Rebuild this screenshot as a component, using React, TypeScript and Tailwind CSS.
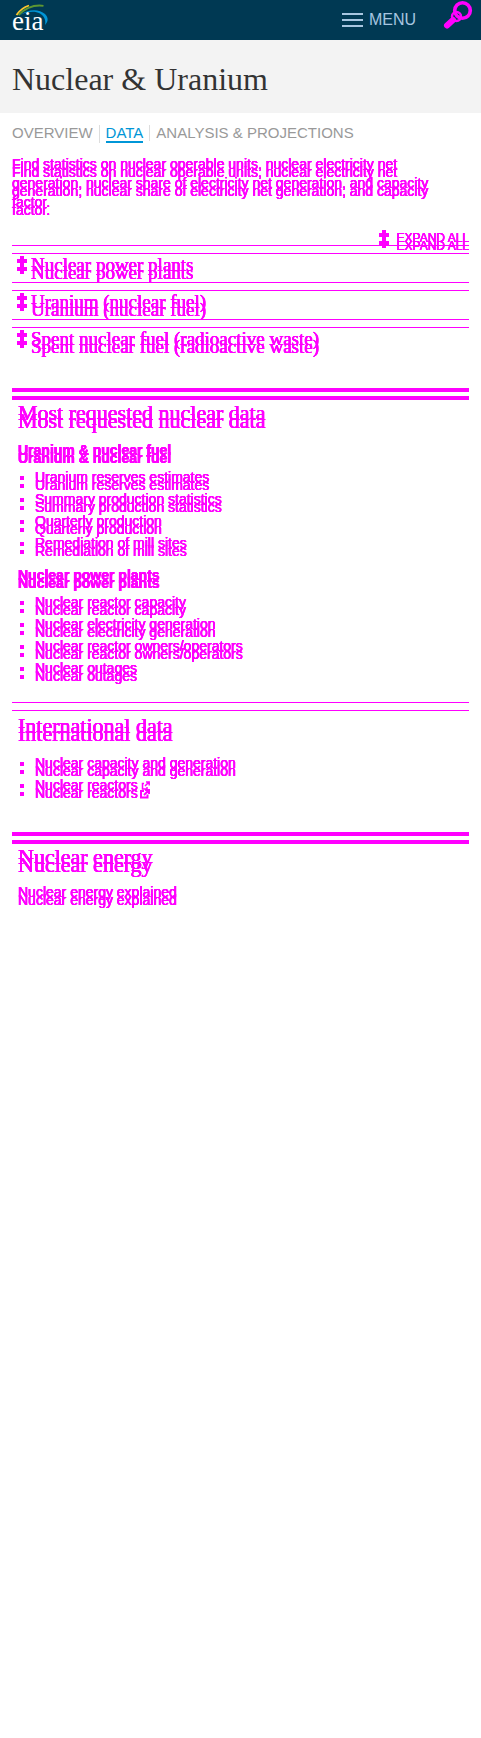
import React from "react";

const ghost =
  "text-[#ff00ff] [text-shadow:0_0_0_#f0f,0_0_0_#f0f,0_0_0_#f0f,0_0_0_#f0f,0_8px_0_#f0f,0_8px_0_#f0f,0_8px_0_#f0f,0_8px_0_#f0f,0_8px_0_#f0f]";

function Rule({ thick = false }: { thick?: boolean }) {
  return (
    <div
      className={
        thick
          ? "h-1 bg-[#ff00ff] shadow-[0_8px_0_#ff00ff]"
          : "h-px bg-[#ff00ff] shadow-[0_8px_0_#ff00ff]"
      }
    />
  );
}

function Plus() {
  return (
    <svg
      width="10"
      height="18"
      viewBox="0 0 10 18"
      fill="#ff00ff"
      shapeRendering="crispEdges"
      className="shrink-0"
      aria-hidden="true"
    >
      <path d="M3 0h4v18H3zM0 3h10v4H0zM0 11h10v4H0z" />
    </svg>
  );
}

function Heading({ children }: { children: React.ReactNode }) {
  return (
    <h2 className={`pl-[6px] font-['Liberation_Serif',serif] text-[22px] leading-6 ${ghost}`}>
      {children}
    </h2>
  );
}

function SubHeading({ children }: { children: React.ReactNode }) {
  return <h3 className={`pl-[6px] text-[14px] leading-5 font-bold ${ghost}`}>{children}</h3>;
}

function LinkList({ items, external }: { items: string[]; external?: string }) {
  return (
    <ul className="pl-2">
      {items.map((item) => (
        <li key={item} className="flex h-[22px] items-start">
          <span className="mt-[10px] mr-[11px] size-1 shrink-0 bg-[#ff00ff] shadow-[0_8px_0_#ff00ff]" />
          <a href="#" className={`text-[14px] leading-[22px] ${ghost}`}>
            {item}
          </a>
          {item === external && (
            <svg
              width="10"
              height="18"
              viewBox="0 0 10 18"
              className="mt-[7px] ml-[2px]"
              fill="none"
              stroke="#ff00ff"
              strokeWidth="1.5"
              aria-hidden="true"
            >
              <path d="M4 2.500H2.500V8H7V6M6 1H9.200V4.500M9 1L5 5" />
              <path strokeWidth="2" d="M4 10H1V16.500H7.500V13.500M5 9H9V13M9 9L4 14" />
            </svg>
          )}
        </li>
      ))}
    </ul>
  );
}

function Logo() {
  return (
    <svg width="38" height="34" viewBox="0 0 38 34" fill="none" aria-label="eia">
      <path d="M4.500 11C7.500 6.500 12 3 17 1.500" stroke="#ffc72c" strokeWidth="1.800" />
      <path d="M6.500 11C13 4.500 22 0.500 31.500 1.800" stroke="#5d9732" strokeWidth="1.800" />
      <path
        d="M8 11C16 5 27 4.500 33 10C37 14 36 18 33 21C34 17 33 12.500 28 9.500C22 6.500 15 8 8 11Z"
        fill="#0096d7"
      />
      <text x="0" y="26" fill="#fff" fontSize="27" fontFamily="Liberation Serif, serif">
        eia
      </text>
    </svg>
  );
}

export default function App() {
  return (
    <div className="min-h-screen bg-white font-['Liberation_Sans',Arial,sans-serif]">
      <header className="flex h-10 items-start justify-between bg-[#003953] pl-3 pr-2">
        <a href="#" className="mt-1">
          <Logo />
        </a>
        <div className="flex items-start">
          <button className="mt-[10px] mr-[27px] flex items-center gap-[6px] text-[16px] leading-5 text-[#a7c6e0]">
            <svg width="21" height="14" viewBox="0 0 21 14" fill="#a7c6e0" aria-hidden="true">
              <path d="M0 0h21v2H0zM0 6h21v2H0zM0 12h21v2H0z" />
            </svg>
            MENU
          </button>
          <button aria-label="Search">
            <svg width="30" height="30" viewBox="0 0 30 30" fill="none" stroke="#ff00ff">
              <circle cx="19.500" cy="10.500" r="7.800" strokeWidth="3.600" />
              <circle cx="13.500" cy="16.500" r="4.500" strokeWidth="2.500" />
              <path d="M10 20L4 25.500" strokeWidth="6" strokeLinecap="round" />
            </svg>
          </button>
        </div>
      </header>

      <div className="bg-[#f3f3f3] px-3 pt-5 pb-[15px]">
        <h1 className="font-['Liberation_Serif',serif] text-[32px] leading-[38px] text-[#333]">
          Nuclear &amp; Uranium
        </h1>
      </div>

      <nav className="flex items-start px-3 pt-3 text-[15px] leading-4 text-[#999]">
        <a href="#" className="mr-[6px]">
          OVERVIEW
        </a>
        <a
          href="#"
          className="border-l border-[#ddd] pl-[6px] mr-[6px] text-[#0096d7]"
        >
          <span className="block border-b-2 border-[#0096d7]">DATA</span>
        </a>
        <a href="#" className="border-l border-[#ddd] pl-[6px]">
          ANALYSIS &amp; PROJECTIONS
        </a>
      </nav>

      <main className="px-3 pt-3">
        <p className={`pr-6 text-[14px] leading-[19px] ${ghost}`}>
          Find statistics on nuclear operable units, nuclear electricity net generation, nuclear
          share of electricity net generation, and capacity factor.
        </p>

        <div className="mt-[18px] flex justify-end">
          <button className={`flex h-[15px] items-start gap-2 text-[12px] leading-4 ${ghost}`}>
            <Plus />
            EXPAND ALL
          </button>
        </div>

        {["Nuclear power plants", "Uranium (nuclear fuel)", "Spent nuclear fuel (radioactive waste)"].map(
          (title) => (
            <section key={title}>
              <Rule />
              <button
                className={`flex w-full items-center gap-1 pt-[9px] pb-[7px] pl-[5px] text-left font-['Liberation_Serif',serif] text-[19px] leading-5 ${ghost}`}
              >
                <Plus />
                {title}
              </button>
            </section>
          )
        )}

        <section className="mt-8">
          <Rule thick />
          <div className="pt-[9px]">
            <Heading>Most requested nuclear data</Heading>
          </div>
          <div className="mt-[15px]">
            <SubHeading>Uranium &amp; nuclear fuel</SubHeading>
          </div>
          <div className="mt-[6px]">
            <LinkList
              items={[
                "Uranium reserves estimates",
                "Summary production statistics",
                "Quarterly production",
                "Remediation of mill sites",
              ]}
            />
          </div>
          <div className="mt-[11px]">
            <SubHeading>Nuclear power plants</SubHeading>
          </div>
          <div className="mt-[6px]">
            <LinkList
              items={[
                "Nuclear reactor capacity",
                "Nuclear electricity generation",
                "Nuclear reactor owners/operators",
                "Nuclear outages",
              ]}
            />
          </div>
        </section>

        <section className="mt-[23px]">
          <Rule />
          <div className="pt-[11px]">
            <Heading>International data</Heading>
          </div>
          <div className="mt-[14px]">
            <LinkList
              items={["Nuclear capacity and generation", "Nuclear reactors"]}
              external="Nuclear reactors"
            />
          </div>
        </section>

        <section className="mt-9">
          <Rule thick />
          <div className="pt-[9px]">
            <Heading>Nuclear energy</Heading>
          </div>
          <p className="mt-[13px] pl-[6px] text-[14px] leading-5">
            <a href="#" className={ghost}>
              Nuclear energy explained
            </a>
          </p>
        </section>
      </main>
    </div>
  );
}
